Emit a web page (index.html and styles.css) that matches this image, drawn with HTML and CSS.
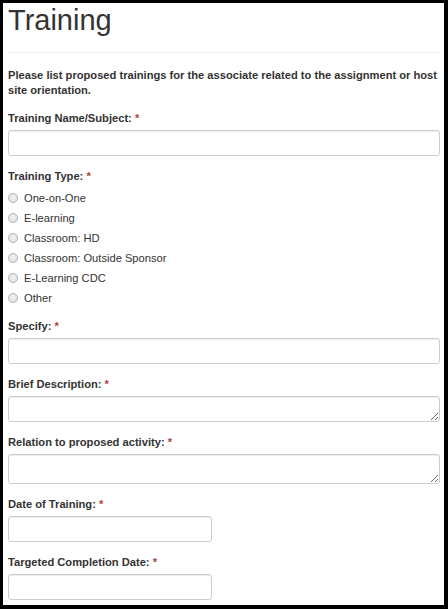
FILE: index.html
```html
<!DOCTYPE html>
<html lang="en">
<head>
<meta charset="utf-8">
<title>Training</title>
<link rel="stylesheet" href="styles.css">
</head>
<body>
<div class="frame">
  <h1 class="title">Training</h1>
  <hr class="rule">
  <p class="intro">Please list proposed trainings for the associate related to the assignment or host site orientation.</p>

  <div class="group">
    <label class="label">Training Name/Subject: <span class="req">*</span></label>
    <input class="control" type="text">
  </div>

  <div class="group group-radios">
    <label class="label">Training Type: <span class="req">*</span></label>
    <div class="radios">
      <label class="radio"><input type="radio" name="tt"><span>One-on-One</span></label>
      <label class="radio"><input type="radio" name="tt"><span>E-learning</span></label>
      <label class="radio"><input type="radio" name="tt"><span>Classroom: HD</span></label>
      <label class="radio"><input type="radio" name="tt"><span>Classroom: Outside Sponsor</span></label>
      <label class="radio"><input type="radio" name="tt"><span>E-Learning CDC</span></label>
      <label class="radio"><input type="radio" name="tt"><span>Other</span></label>
    </div>
  </div>

  <div class="group">
    <label class="label">Specify: <span class="req">*</span></label>
    <input class="control" type="text">
  </div>

  <div class="group">
    <label class="label">Brief Description: <span class="req">*</span></label>
    <textarea class="control area"></textarea>
  </div>

  <div class="group">
    <label class="label">Relation to proposed activity: <span class="req">*</span></label>
    <textarea class="control area tall"></textarea>
  </div>

  <div class="group">
    <label class="label">Date of Training: <span class="req">*</span></label>
    <input class="control short" type="text">
  </div>

  <div class="group">
    <label class="label">Targeted Completion Date: <span class="req">*</span></label>
    <input class="control short" type="text">
  </div>
</div>
</body>
</html>
```

FILE: styles.css
```css
html, body {
  margin: 0;
  padding: 0;
  background: #000;
}

body {
  font-family: "Liberation Sans", Arial, Helvetica, sans-serif;
  color: #333;
}

.frame {
  margin: 3px 4px 4px 3px;
  height: 602px;
  background: #fff;
  padding: 0 4px 0 5px;
  box-sizing: border-box;
  overflow: hidden;
}

.title {
  margin: 1px 0 0;
  font-size: 29px;
  line-height: 32px;
  font-weight: normal;
  color: #333;
}

.rule {
  margin: 16px 0 0;
  border: 0;
  border-top: 1px solid #eee;
  height: 0;
}

.intro {
  margin: 15px 0 12px;
  font-size: 11.15px;
  font-weight: bold;
  line-height: 15px;
}

.group {
  margin-bottom: 12px;
}

.group-radios {
  margin-bottom: 10px;
}

.label {
  display: block;
  font-size: 11.15px;
  font-weight: bold;
  line-height: 16px;
  margin-bottom: 4px;
}

.req {
  color: #a94442;
}

.control {
  display: block;
  box-sizing: border-box;
  width: 100%;
  height: 26px;
  margin: 0;
  padding: 4px 8px;
  border: 1px solid #ccc;
  border-radius: 3px;
  box-shadow: inset 0 1px 1px rgba(0, 0, 0, 0.075);
  background: #fff;
  font: 11px "Liberation Sans", Arial, sans-serif;
}

.area {
  resize: vertical;
}

.tall {
  height: 30px;
}

.short {
  width: 204px;
}

.radios {
  display: flex;
  flex-direction: column;
}

.radio {
  display: flex;
  align-items: center;
  gap: 6px;
  height: 20px;
  font-size: 11.15px;
  line-height: 20px;
}

.radio input {
  appearance: none;
  -webkit-appearance: none;
  margin: 0;
  width: 10px;
  height: 10px;
  border-radius: 50%;
  border: 1px solid #b3b3b3;
  background: radial-gradient(circle at 50% 40%, #f2f2f2 0%, #dcdcdc 100%);
  box-sizing: border-box;
  flex: none;
}
```
